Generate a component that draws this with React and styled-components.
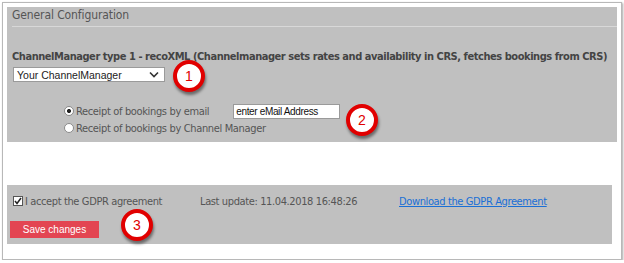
import styled, { createGlobalStyle } from 'styled-components';

const GlobalStyle = createGlobalStyle`
  html, body {
    margin: 0;
    padding: 0;
    background: #ffffff;
  }
`;

const App = () => {
    return (
        <>
            <GlobalStyle />
            <Frame>
                <ConfigPanel>
                    <Header>General Configuration</Header>
                    <Title>ChannelManager type 1 - recoXML (Channelmanager sets rates and availability in CRS, fetches bookings from CRS)</Title>
                    <FakeSelect>
                        <span>Your ChannelManager</span>
                        <svg width="10" height="7" viewBox="0 0 10 7">
                            <path d="M1 1.5 L5 5.5 L9 1.5" fill="none" stroke="#333" strokeWidth="1.6" />
                        </svg>
                    </FakeSelect>
                    <Options>
                        <OptionRow>
                            <Radio $checked />
                            <OptionLabel>Receipt of bookings by email</OptionLabel>
                            <EmailInput>enter eMail Address</EmailInput>
                        </OptionRow>
                        <OptionRow>
                            <Radio />
                            <OptionLabel>Receipt of bookings by Channel Manager</OptionLabel>
                        </OptionRow>
                    </Options>
                    <Callout $x={166} $y={53}>1</Callout>
                    <Callout $x={339} $y={97}>2</Callout>
                </ConfigPanel>
                <ConsentPanel>
                    <ConsentRow>
                        <Check>
                            <svg width="8" height="8" viewBox="0 0 8 8">
                                <path d="M1 4 L3 6.5 L7 1" fill="none" stroke="#222" strokeWidth="1.5" />
                            </svg>
                        </Check>
                        <ConsentLabel>I accept the GDPR agreement</ConsentLabel>
                        <Updated>Last update: 11.04.2018 16:48:26</Updated>
                        <DownloadLink href="#">Download the GDPR Agreement</DownloadLink>
                    </ConsentRow>
                    <SaveButton>Save changes</SaveButton>
                    <Callout $x={114} $y={24}>3</Callout>
                </ConsentPanel>
            </Frame>
        </>
    )
}

export default App

const Frame = styled.div`
    box-sizing: border-box;
    margin: 2px 0 0 2px;
    width: 620px;
    height: 258px;
    padding: 4px;
    border: 1px solid #b8b8b8;
    box-shadow: 1px 1px 2px rgba(0, 0, 0, 0.35);
    background: #fff;
`;

const Panel = styled.div`
    position: relative;
    background: #c0c0c0;
    font-family: "DejaVu Sans Condensed", "DejaVu Sans", sans-serif;
    color: #555;
`;

const ConfigPanel = styled(Panel)`
    height: 135px;
    padding-left: 5px;
`;

const Header = styled.div`
    height: 19px;
    line-height: 16px;
    font-size: 12px;
    letter-spacing: -0.1px;
    border-bottom: 1px solid #d8d8d8;
`;

const Title = styled.div`
    margin-top: 23px;
    font-size: 11px;
    font-weight: bold;
    color: #444;
    line-height: 13px;
    letter-spacing: -0.45px;
    white-space: nowrap;
`;

const FakeSelect = styled.div`
    box-sizing: border-box;
    margin: 4px 0 0 1px;
    width: 152px;
    height: 15px;
    padding: 0 5px 0 3px;
    display: flex;
    align-items: center;
    justify-content: space-between;
    background: #fff;
    border: 1px solid #9a9a9a;
    font-family: "Liberation Sans", Arial, sans-serif;
    font-size: 10.5px;
    color: #222;
`;

const Options = styled.div`
    margin: 22px 0 0 52px;
    display: flex;
    flex-direction: column;
    gap: 3px;
`;

const OptionRow = styled.div`
    display: flex;
    align-items: center;
    height: 14px;
`;

const Radio = styled.span`
    box-sizing: border-box;
    width: 10px;
    height: 10px;
    border-radius: 50%;
    border: 1px solid #8a8a8a;
    background: ${p => p.$checked ? 'radial-gradient(circle, #222 0 1.8px, #fff 2.3px)' : '#fff'};
    margin-right: 2px;
`;

const OptionLabel = styled.span`
    font-size: 11px;
    letter-spacing: -0.35px;
    white-space: nowrap;
`;

const EmailInput = styled.div`
    box-sizing: border-box;
    margin-left: 24px;
    width: 107px;
    height: 15px;
    padding: 0 2px;
    background: #fff;
    border: 1px solid #9a9a9a;
    font-family: "Liberation Sans", Arial, sans-serif;
    font-size: 10px;
    letter-spacing: -0.35px;
    line-height: 13px;
    color: #111;
`;

const Callout = styled.div`
    position: absolute;
    left: ${p => p.$x}px;
    top: ${p => p.$y}px;
    box-sizing: border-box;
    width: 32px;
    height: 32px;
    border-radius: 50%;
    border: 4px solid #e10000;
    background: #fff;
    box-shadow: 1px 3px 3px rgba(0, 0, 0, 0.45);
    display: flex;
    align-items: center;
    justify-content: center;
    font-family: "Liberation Sans", Arial, sans-serif;
    font-size: 14px;
    color: #e00000;
`;

const ConsentPanel = styled(Panel)`
    margin: 43px 5px 0 0;
    height: 59px;
    padding: 10px 0 0 6px;
    box-sizing: border-box;
`;

const ConsentRow = styled.div`
    display: flex;
    align-items: center;
    height: 12px;
    font-size: 11px;
    letter-spacing: -0.38px;
    white-space: nowrap;
`;

const Check = styled.span`
    box-sizing: border-box;
    width: 10px;
    height: 10px;
    border: 1px solid #555;
    background: #fff;
    display: flex;
    align-items: center;
    justify-content: center;
    margin-right: 2px;
`;

const ConsentLabel = styled.span`
    width: 175px;
`;

const Updated = styled.span`
    width: 199px;
`;

const DownloadLink = styled.a`
    color: #1a6fd6;
    text-decoration: underline;
`;

const SaveButton = styled.button`
    margin: 14px 0 0 -3px;
    width: 89px;
    height: 17px;
    padding: 0;
    border: none;
    background: #e34552;
    color: #fff;
    font-family: "Liberation Sans", Arial, sans-serif;
    font-size: 10px;
    cursor: pointer;
`;
